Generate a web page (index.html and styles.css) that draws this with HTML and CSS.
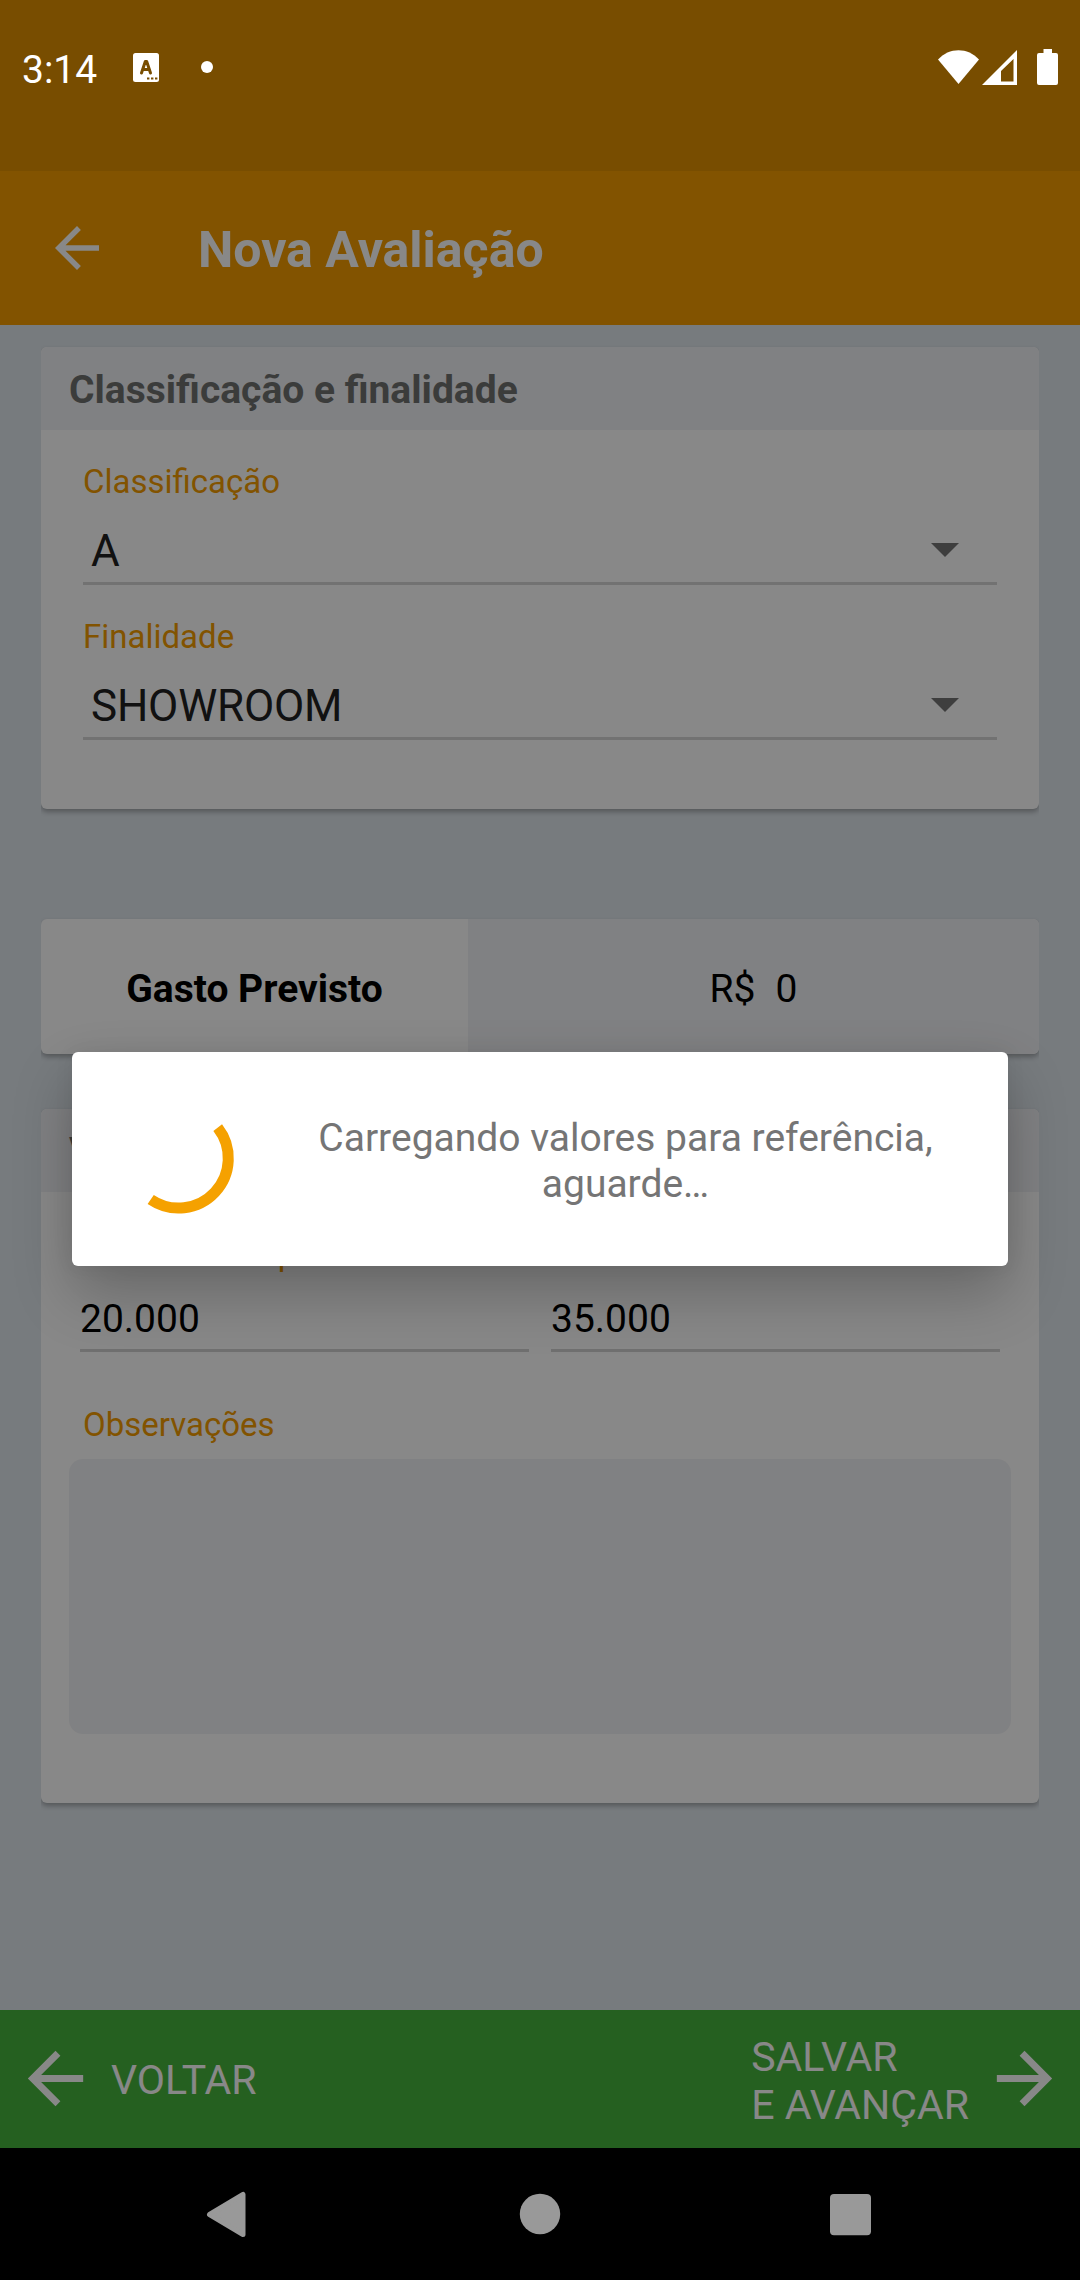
FILE: index.html
```html
<!DOCTYPE html>
<html lang="pt-BR">
<head>
<meta charset="utf-8">
<title>Nova Avaliação</title>
<link rel="stylesheet" href="styles.css">
</head>
<body>
<div class="screen">
  <header class="status-bar">
    <div class="status-left">
      <span class="clock">3:14</span>
      <svg class="status-app" width="26" height="29" viewBox="0 0 26 29"><rect width="26" height="29" rx="2.5" fill="#fff"/><path d="M8.500 20 12.300 8.500h1.400L17.500 20M9.500 16.500h7" fill="none" stroke="#784d00" stroke-width="3" stroke-linecap="round" stroke-linejoin="round"/><path d="M14 25.500h2.400M18 25.500h2.400M22 25.500h2.400" stroke="#784d00" stroke-width="2.200"/></svg>
      <span class="status-dot"></span>
    </div>
    <div class="status-right">
      <svg class="wifi" width="41" height="34" viewBox="0 0 41 34"><path d="M0 9.500C11-3 30-3 41 9.500L20.500 34z" fill="#fff"/></svg>
      <svg class="signal" width="35" height="35" viewBox="0 0 35 35"><path fill-rule="evenodd" d="M35 0V35H0zM31.500 9 19 21V31.500H31.500z" fill="#fff"/></svg>
      <svg class="battery" width="21" height="36" viewBox="0 0 21 36"><path d="M6.500 0h8.500v4h4a2 2 0 0 1 2 2v28a2 2 0 0 1-2 2H2a2 2 0 0 1-2-2V6a2 2 0 0 1 2-2h4.500z" fill="#fff"/></svg>
    </div>
  </header>

  <div class="app-bar">
    <svg class="back-icon" width="66" height="66" viewBox="0 0 24 24"><path d="M20 11H7.830l5.590-5.590L12 4l-8 8 8 8 1.410-1.410L7.830 13H20v-2z" fill="#fff"/></svg>
    <h1 class="app-title">Nova Avaliação</h1>
  </div>

  <main class="content">
    <section class="card">
      <h2 class="card-header">Classificação e finalidade</h2>
      <div class="card-body">
        <div class="field">
          <div class="label">Classificação</div>
          <div class="select"><span>A</span><svg width="28" height="14" viewBox="0 0 28 14"><path d="M0 0h28L14 14z" fill="#757575"/></svg></div>
        </div>
        <div class="field">
          <div class="label">Finalidade</div>
          <div class="select"><span>SHOWROOM</span><svg width="28" height="14" viewBox="0 0 28 14"><path d="M0 0h28L14 14z" fill="#757575"/></svg></div>
        </div>
      </div>
    </section>

    <section class="card cost">
      <div class="cost-label">Gasto Previsto</div>
      <div class="cost-value"><span>R$</span><span>0</span></div>
    </section>

    <section class="card values">
      <h2 class="card-header">Valores</h2>
      <div class="values-row">
        <div><div class="label">Valor de compra</div><div class="input">20.000</div></div>
        <div><div class="label">Valor de venda</div><div class="input">35.000</div></div>
      </div>
      <div class="label notes-label">Observações</div>
      <div class="notes"></div>
    </section>
  </main>

  <footer class="actions">
    <div class="action">
      <svg width="83" height="83" viewBox="0 0 24 24"><path d="M20 11H7.830l5.590-5.590L12 4l-8 8 8 8 1.410-1.410L7.830 13H20v-2z" fill="#fff"/></svg>
      <span>VOLTAR</span>
    </div>
    <div class="action next">
      <span>SALVAR<br>E AVANÇAR</span>
      <svg width="83" height="83" viewBox="0 0 24 24"><path d="M12 4l-1.410 1.410L16.170 11H4v2h12.170l-5.580 5.590L12 20l8-8z" fill="#fff"/></svg>
    </div>
  </footer>

  <nav class="nav-bar">
    <svg width="48" height="48" viewBox="0 0 48 48"><path d="M4.500 24.500 38 4.500v40z" fill="#999" stroke="#999" stroke-width="5" stroke-linejoin="round"/></svg>
    <svg width="48" height="48" viewBox="0 0 48 48"><circle cx="24" cy="24" r="20.200" fill="#999"/></svg>
    <svg width="48" height="48" viewBox="0 0 48 48"><rect x="3" y="4" width="41" height="41.300" rx="4" fill="#999"/></svg>
  </nav>

  <div class="scrim">
    <div class="dialog" role="dialog">
      <svg class="spinner" width="110" height="110" viewBox="0 0 110 110"><path d="M93.700 23.700A49.700 49.700 0 0 1 26.700 95.500" fill="none" stroke="#f5a100" stroke-width="11"/></svg>
      <p class="message">Carregando valores para referência, aguarde…</p>
    </div>
  </div>
</div>
</body>
</html>
```
FILE: styles.css
```css
* { box-sizing: border-box; }

body {
  margin: 0;
  font-family: Roboto, "Liberation Sans", sans-serif;
  font-size: 39px;
  color: #000;
}

h1, h2, p { margin: 0; }
svg { display: block; flex: none; }

.screen {
  position: relative;
  display: flex;
  flex-direction: column;
  width: 1080px;
  height: 2280px;
  overflow: hidden;
  background: #dfe6ec;
}

/* System status bar: its icons stay bright above the scrim */
.status-bar {
  position: relative;
  z-index: 2;
  height: 171px;
  display: flex;
  justify-content: space-between;
  align-items: flex-start;
  padding: 47px 22px 0 22px;
  background: #784d00;
  color: #fff;
}
.status-left, .status-right { display: flex; align-items: center; height: 40px; }
.clock { width: 111px; line-height: 40px; padding-top: 6px; }
.status-dot { width: 12px; height: 12px; margin-left: 42px; border-radius: 50%; background: #fff; }
.signal { margin-left: 3px; }
.battery { margin-left: 20px; }

.app-bar {
  height: 154px;
  display: flex;
  align-items: center;
  padding: 0 44px;
  background: #f39c00;
  color: #fff;
}
.app-title { margin-left: 88px; padding-top: 4px; font-size: 50px; line-height: 60px; font-weight: 700; }

.content { flex: 1; padding: 22px 41px 0; }

.card {
  border-radius: 6px;
  background: #fff;
  box-shadow: 0 3px 5px rgba(0, 0, 0, 0.28);
  clip-path: inset(-3px 0 -12px);
}
.card-header {
  height: 83px;
  padding: 2px 28px 0;
  border-radius: 6px 6px 0 0;
  background: #f1f2f5;
  color: #6f7170;
  font-size: 39px;
  line-height: 83px;
  font-weight: 700;
}
.card-body { height: 379px; padding: 0 42px; }

.field { padding-top: 31px; }
.label { height: 40px; font-size: 33px; line-height: 42px; color: #f39c00; }
.select {
  height: 84px;
  display: flex;
  align-items: center;
  justify-content: space-between;
  padding: 17px 38px 0 8px;
  border-bottom: 3px solid #d6d6d6;
  font-size: 44px;
  letter-spacing: -0.2px;
  color: #212121;
}
.select span { padding-top: 2px; }

.cost { display: flex; height: 135px; margin-top: 110px; line-height: 141px; text-align: center; }
.cost-label { width: 427px; font-weight: 700; }
.cost-value {
  flex: 1;
  display: flex;
  justify-content: center;
  gap: 20px;
  border-radius: 0 6px 6px 0;
  background: #f1f2f5;
}

.values { height: 694px; margin-top: 55px; }
.values-row { display: grid; grid-template-columns: 1fr 1fr; gap: 22px; padding: 41px 39px 0; }
.values-row .label { padding-left: 4px; }
.input { height: 79px; padding-top: 16px; line-height: 60px; border-bottom: 3px solid #d2d2d2; }
.notes-label { margin: 53px 42px 14px; line-height: 40px; }
.notes { height: 275px; margin: 0 28px; border-radius: 14px; background: #f1f2f5; }

.actions {
  height: 138px;
  display: flex;
  justify-content: space-between;
  align-items: center;
  padding: 0 14px 1px;
  background: #46b43d;
  color: #fff;
  font-size: 41px;
  line-height: 48px;
}
.action { display: flex; align-items: center; gap: 14px; }
.action span { padding-top: 3px; }
.next span { padding-top: 5px; }

.nav-bar {
  position: relative;
  z-index: 2;
  height: 132px;
  display: flex;
  justify-content: center;
  align-items: center;
  gap: 263px;
  background: #000;
}

/* Modal layer */
.scrim {
  position: absolute;
  inset: 0;
  z-index: 1;
  display: flex;
  justify-content: center;
  align-items: flex-start;
  padding-top: 1052px;
  background: rgba(0, 0, 0, 0.467);
}
.dialog {
  width: 936px;
  height: 214px;
  display: flex;
  align-items: center;
  padding: 0 55px 0 52px;
  border-radius: 6px;
  background: #fff;
  box-shadow: 0 28px 60px rgba(0, 0, 0, 0.24), 0 0 20px rgba(0, 0, 0, 0.06);
}
.spinner { overflow: visible; }
.message {
  flex: 1;
  margin-left: 64px;
  padding-top: 3px;
  font-size: 39px;
  line-height: 46px;
  color: #757575;
  text-align: center;
}
```
